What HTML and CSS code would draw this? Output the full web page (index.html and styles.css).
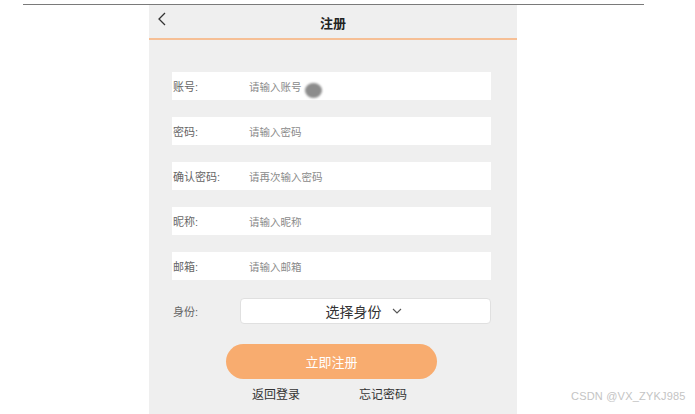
FILE: index.html
```html
<!DOCTYPE html>
<html lang="zh-CN">
<head>
    <meta charset="UTF-8">
    <title>注册</title>
    <link rel="stylesheet" href="styles.css">
</head>
<body>
    <div class="top-rule"></div>
    <div class="phone">
        <div class="nav-bar">
            <span class="nav-back">
                <svg width="10" height="14" viewBox="0 0 10 14"><path d="M8 1 L2 7 L8 13" fill="none" stroke="#333" stroke-width="1.3"/></svg>
            </span>
            <div class="nav-title">注册</div>
        </div>

        <div class="form">
            <div class="field">
                <span class="field-label">账号:</span>
                <span class="field-input">请输入账号</span>
                <span class="cursor-dot"></span>
            </div>
            <div class="field">
                <span class="field-label">密码:</span>
                <span class="field-input">请输入密码</span>
            </div>
            <div class="field">
                <span class="field-label">确认密码:</span>
                <span class="field-input">请再次输入密码</span>
            </div>
            <div class="field">
                <span class="field-label">昵称:</span>
                <span class="field-input">请输入昵称</span>
            </div>
            <div class="field">
                <span class="field-label">邮箱:</span>
                <span class="field-input">请输入邮箱</span>
            </div>
            <div class="field field-select">
                <span class="field-label">身份:</span>
                <div class="select-box">
                    <span>选择身份</span>
                    <svg width="10" height="6" viewBox="0 0 10 6"><path d="M1 1 L5 5 L9 1" fill="none" stroke="#555" stroke-width="1.1"/></svg>
                </div>
            </div>
        </div>

        <div class="submit-btn">立即注册</div>

        <div class="links">
            <span>返回登录</span>
            <span>忘记密码</span>
        </div>
    </div>
    <div class="watermark">CSDN @VX_ZYKJ985</div>
</body>
</html>
```

FILE: styles.css
```css
* { margin: 0; padding: 0; box-sizing: border-box; }

body {
    width: 695px;
    height: 414px;
    overflow: hidden;
    background: #fff;
    font-family: "Liberation Sans", "Noto Sans CJK SC", sans-serif;
    position: relative;
}

.top-rule {
    margin: 4px 51px 0 23px;
    height: 1px;
    background: #7a7a7a;
}

.phone {
    width: 368px;
    height: 409px;
    margin-left: 149px;
    background: #efefef;
}

.nav-bar {
    height: 35px;
    border-bottom: 2px solid #f6bf95;
    position: relative;
    display: flex;
    align-items: center;
    justify-content: center;
}

.nav-back {
    position: absolute;
    left: 8px;
    top: 7px;
}

.nav-title {
    font-size: 13px;
    font-weight: 700;
    color: #222;
    margin-top: 1px;
}

.form {
    padding: 32px 26px 0 23px;
    display: flex;
    flex-direction: column;
    gap: 17px;
}

.field {
    height: 28px;
    background: #fff;
    display: flex;
    align-items: center;
    position: relative;
}

.field-label {
    width: 77px;
    padding-left: 1px;
    font-size: 11px;
    color: #666;
}

.field-input {
    font-size: 10.5px;
    color: #8a8a8a;
}

.cursor-dot {
    position: absolute;
    left: 133px;
    top: 11px;
    width: 17px;
    height: 15px;
    border-radius: 50%;
    background: #8c8c8c;
    filter: blur(0.8px);
}

.field-select {
    background: transparent;
    height: 28px;
}

.field-select .field-label {
    width: 68px;
}

.select-box {
    flex: 1;
    height: 26px;
    background: #fff;
    border: 1px solid #e0e0e0;
    border-radius: 4px;
    display: flex;
    align-items: center;
    justify-content: center;
    gap: 10px;
    font-size: 14px;
    color: #333;
    padding-right: 4px;
}

.submit-btn {
    width: 211px;
    height: 35px;
    margin: 19px 0 0 77px;
    border-radius: 18px;
    background: #f8ac6f;
    color: #fff;
    font-size: 13px;
    display: flex;
    align-items: center;
    justify-content: center;
}

.links {
    display: flex;
    gap: 59px;
    margin: 6px 0 0 103px;
    font-size: 12px;
    color: #333;
}

.watermark {
    position: absolute;
    left: 571px;
    top: 390px;
    font-size: 11px;
    color: #c4c4c4;
    letter-spacing: 0.2px;
}
```
